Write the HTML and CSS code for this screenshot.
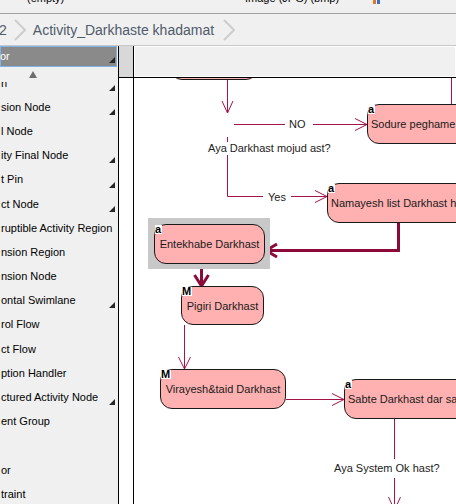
FILE: index.html
```html
<!DOCTYPE html>
<html lang="en">
<head>
    <meta charset="UTF-8">
    <meta name="viewport" content="width=device-width, initial-scale=1.0">
    <title>Activity_Darkhaste khadamat</title>
    <link rel="stylesheet" href="styles.css">
</head>
<body>
    <div class="topstrip">
        <span class="prop-name">(empty)</span>
        <span class="prop-value">Image (JPG) (bmp)</span>
        <svg class="prop-icon" width="8" height="4" viewBox="0 0 8 4">
            <rect x="0" y="0" width="3" height="4" fill="#e0782c"/>
            <rect x="4" y="0" width="3" height="4" fill="#3a6fc4"/>
        </svg>
    </div>

    <div class="crumbs">
        <span class="crumb">2</span>
        <svg class="crumb-sep" viewBox="0 0 12 22"><polyline points="1,1 11,11 1,21"/></svg>
        <span class="crumb">Activity_Darkhaste khadamat</span>
        <svg class="crumb-sep" viewBox="0 0 12 22"><polyline points="1,1 11,11 1,21"/></svg>
    </div>

    <div class="workspace">
        <aside class="palette">
            <div class="palette-head">or<i class="corner"></i></div>
            <div class="palette-scroll"><i class="up"></i></div>
            <div class="palette-clip">
                <ul class="palette-list">
                    <li class="more">n</li>
                    <li class="more">sion Node</li>
                    <li>l Node</li>
                    <li class="more">ity Final Node</li>
                    <li class="more">t Pin</li>
                    <li class="more">ct Node</li>
                    <li>ruptible Activity Region</li>
                    <li>nsion Region</li>
                    <li>nsion Node</li>
                    <li class="more">ontal Swimlane</li>
                    <li>rol Flow</li>
                    <li>ct Flow</li>
                    <li>ption Handler</li>
                    <li class="more">ctured Activity Node</li>
                    <li>ent Group</li>
                    <li></li>
                    <li>or</li>
                    <li>traint</li>
                </ul>
            </div>
        </aside>

        <div class="gutter"><div class="gutter-top"></div></div>

        <div class="editor">
            <div class="ruler"><div class="ruler-box"></div></div>

            <div class="canvas">
                <svg class="wires" width="322" height="426" viewBox="0 0 322 426">
                    <g class="thin">
                        <path d="M93.5 2V35"/>
                        <path d="M88 23L93.5 35L99 23"/>
                        <path d="M100 46.5H233"/>
                        <path d="M221 40.5L233 46.5L221 52.5"/>
                        <path d="M317.5 0V26"/>
                        <path d="M93.5 59V118.5H193"/>
                        <path d="M181 112.5L193 118.5L181 124.5"/>
                        <path d="M50.5 247V291"/>
                        <path d="M44.5 279L50.5 291L56.5 279"/>
                        <path d="M152 321.5H210"/>
                        <path d="M198 315.5L210 321.5L198 327.5"/>
                        <path d="M260.5 341V432"/>
                        <path d="M254.5 419L260.5 432L266.5 419"/>
                    </g>
                    <g class="thick">
                        <path d="M264.5 145V172.5H133"/>
                        <path d="M143 166L132 172.5L143 179"/>
                        <path d="M67.5 186V207"/>
                        <path d="M60.5 197L67.5 208L74.5 197"/>
                    </g>
                </svg>

                <div class="node n-top"></div>

                <div class="node wide n-sodure"><b class="stereo">a</b>Sodure peghame khata</div>
                <div class="label l-no">NO</div>
                <div class="label l-mojud">Aya Darkhast mojud ast?</div>
                <div class="label l-yes">Yes</div>
                <div class="node wide n-namayesh"><b class="stereo">a</b>Namayesh list Darkhast ha</div>

                <div class="selection"></div>
                <div class="node n-entekhab"><b class="stereo">a</b>Entekhabe Darkhast</div>

                <div class="node n-pigiri"><b class="stereo">M</b>Pigiri Darkhast</div>
                <div class="node n-virayesh"><b class="stereo">M</b>Virayesh&amp;taid Darkhast</div>
                <div class="node wide n-sabte"><b class="stereo">a</b>Sabte Darkhast dar sabt</div>
                <div class="label l-system">Aya System Ok hast?</div>
            </div>
        </div>
    </div>
</body>
</html>
```

FILE: styles.css
```css
html, body {
    margin: 0;
    padding: 0;
    height: 504px;
    overflow: hidden;
}
body {
    font-family: "Liberation Sans", Arial, sans-serif;
    font-size: 11px;
    color: #000;
    background-color: #f0f0f0;
}

/* property strip scrolled almost out of view */
.topstrip {
    display: flex;
    height: 13px;
    overflow: hidden;
    border-bottom: 1px solid #a0a0a0;
}
.topstrip span {
    margin-top: -8px;
    line-height: 12px;
    white-space: nowrap;
}
.prop-name {
    width: 218px;
    padding-left: 27px;
}
.prop-value {
    width: 128px;
}
.prop-icon {
    display: block;
}

/* breadcrumb */
.crumbs {
    display: flex;
    align-items: center;
    height: 31px;
    border-bottom: 1px solid #c8c8c8;
    white-space: nowrap;
}
.crumb {
    font-size: 14px;
    color: #4f5a6b;
}
.crumb:first-child {
    margin-left: -1px;
}
.crumb-sep {
    width: 12px;
    height: 22px;
    margin: 0 7px 0 7px;
}
.crumb-sep polyline {
    fill: none;
    stroke: #cdcdcd;
    stroke-width: 2;
}
.crumb + .crumb-sep + .crumb + .crumb-sep {
    margin-left: 9px;
}

.workspace {
    display: flex;
    height: 458px;
}

/* palette */
.palette {
    width: 118px;
    flex-shrink: 0;
    background-color: #f0f0f0;
}
.palette-head {
    position: relative;
    box-sizing: border-box;
    width: 117px;
    height: 21px;
    border: 1px solid #7fb2e8;
    background-color: #8a8a8a;
    color: #fff;
    line-height: 19px;
    text-indent: -1px;
}
.corner,
.palette-list li.more::after {
    position: absolute;
    width: 0;
    height: 0;
    border-left: 6px solid transparent;
    border-bottom: 6px solid #262626;
}
.corner {
    right: 1px;
    bottom: 3px;
}
.palette-scroll {
    position: relative;
    height: 15px;
}
.up {
    position: absolute;
    left: 29px;
    top: 4px;
    width: 0;
    height: 0;
    border-left: 4px solid transparent;
    border-right: 4px solid transparent;
    border-bottom: 7px solid #6e6e6e;
}
.palette-clip {
    height: 422px;
    overflow: hidden;
}
.palette-list {
    list-style: none;
    margin: -11.4px 0 0 0;
    padding: 0;
    width: 117px;
}
.palette-list li {
    position: relative;
    height: 24.2px;
    line-height: 24.2px;
    padding-left: 1px;
    white-space: nowrap;
}
.palette-list li.more::after {
    content: "";
    right: 2px;
    bottom: 4px;
}

/* gutter between palette and diagram */
.gutter {
    width: 14px;
    flex-shrink: 0;
    border-left: 1px solid #000;
    border-right: 1px solid #000;
    background-color: #fff;
}
.gutter-top {
    height: 31px;
    background-color: #d8d8d8;
    border-bottom: 1px solid #000;
}

.editor {
    flex: 1;
    display: flex;
    flex-direction: column;
    min-width: 0;
}
.ruler {
    height: 31px;
    border-bottom: 1px solid #000;
}
.ruler-box {
    box-sizing: border-box;
    height: 31px;
    border: 1px solid #fff;
    background-color: #f0f0f0;
}

/* diagram */
.canvas {
    position: relative;
    flex: 1;
    overflow: hidden;
    background-color: #fff;
    color: #1a1a1a;
}
.wires {
    position: absolute;
    left: 0;
    top: 0;
}
.wires path {
    fill: none;
}
.wires .thin path {
    stroke: #a3144a;
    stroke-width: 1;
}
.wires .thick path {
    stroke: #8b0a3a;
    stroke-width: 3;
}

.node {
    position: absolute;
    box-sizing: border-box;
    height: 40px;
    display: flex;
    align-items: center;
    justify-content: center;
    background-color: #ffb1b1;
    border: 1px solid #1a1a1a;
    border-radius: 12px;
    white-space: nowrap;
}
.node.wide {
    justify-content: flex-start;
    padding-left: 3px;
}
.stereo {
    position: absolute;
    left: 0;
    top: 0;
    font-size: 11px;
    line-height: 9px;
    color: #000;
    background-color: #fff;
    padding-right: 1px;
}

.selection {
    position: absolute;
    left: 14px;
    top: 140px;
    width: 122px;
    height: 51px;
    background-color: #c8c8c8;
}

.n-top { left: 36px; top: -38px; width: 88px; }
.n-sodure { left: 233px; top: 26px; width: 150px; }
.n-namayesh { left: 193px; top: 105px; width: 180px; padding-left: 5px; }
.n-entekhab { left: 20px; top: 146px; width: 111px; }
.n-pigiri { left: 47px; top: 208px; width: 83px; height: 39px; }
.n-virayesh { left: 26px; top: 291px; width: 126px; }
.n-sabte { left: 210px; top: 301px; width: 160px; }

.label {
    position: absolute;
    background-color: #fff;
    line-height: 13px;
    white-space: nowrap;
    color: #222;
}
.l-no { left: 151px; top: 40px; padding: 0 7px 0 4px; }
.l-mojud { left: 74px; top: 64px; }
.l-yes { left: 129px; top: 113px; padding: 0 5px; }
.l-system { left: 198px; top: 381px; padding: 3px 2px; }
```
